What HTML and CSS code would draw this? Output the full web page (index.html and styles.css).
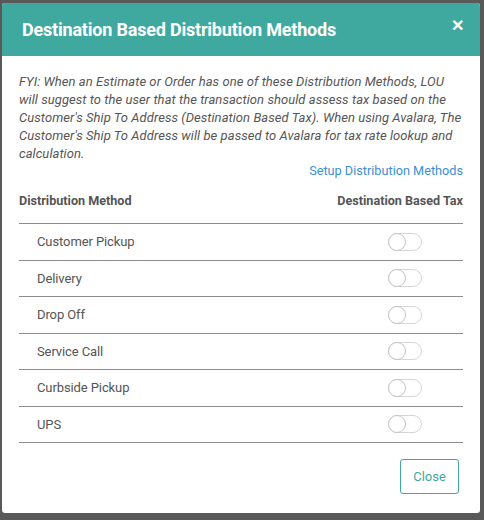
FILE: index.html
```html
<!DOCTYPE html>
<html>
<head>
<meta charset="utf-8">
<title>Destination Based Distribution Methods</title>
<link rel="stylesheet" href="styles.css">
</head>
<body>

<div class="modal">
    <div class="modal-header">
        <h2>Destination Based Distribution Methods</h2>
        <span class="close-x">&#x2715;</span>
    </div>
    <div class="modal-body">
        <p class="fyi">FYI: When an Estimate or Order has one of these Distribution Methods, LOU
        will suggest to the user that the transaction should assess tax based on the
        Customer's Ship To Address (Destination Based Tax). When using Avalara, The
        Customer's Ship To Address will be passed to Avalara for tax rate lookup and
        calculation.</p>
        <div class="setup"><a>Setup Distribution Methods</a></div>
        <table class="methods">
            <thead>
                <tr><th>Distribution Method</th><th class="tax">Destination Based Tax</th></tr>
            </thead>
            <tbody>
                <tr><td>Customer Pickup</td><td class="tax"><span class="toggle"></span></td></tr>
                <tr><td>Delivery</td><td class="tax"><span class="toggle"></span></td></tr>
                <tr><td>Drop Off</td><td class="tax"><span class="toggle"></span></td></tr>
                <tr><td>Service Call</td><td class="tax"><span class="toggle"></span></td></tr>
                <tr><td>Curbside Pickup</td><td class="tax"><span class="toggle"></span></td></tr>
                <tr><td>UPS</td><td class="tax"><span class="toggle"></span></td></tr>
            </tbody>
        </table>
    </div>
    <div class="modal-footer">
        <button class="btn-close">Close</button>
    </div>
</div>

</body>
</html>
```

FILE: styles.css
```css
html, body { margin: 0; height: 100%; }
body { background-color: #595959; font-family: Roboto, "Liberation Sans", sans-serif; color: #555; padding: 3px 4px 0 2px; box-sizing: border-box; }

.modal { background-color: #fff; border-radius: 3px; overflow: hidden; height: 510px; display: flex; flex-direction: column; }

.modal-header { background-color: #3fa9a0; color: #fff; height: 53px; flex-shrink: 0; display: flex; align-items: flex-start; justify-content: space-between; padding: 0 16px 0 20px; }
.modal-header h2 { margin: 0; padding-top: 17px; font-size: 18px; font-weight: 700; line-height: 20px; letter-spacing: -0.2px; }
.close-x { font-size: 16px; font-weight: 700; padding-top: 13px; line-height: 20px; }

.modal-body { padding: 17px 17px 0 17px; }
.fyi { margin: 0 -2px 0 0; font-size: 13px; font-style: italic; line-height: 18px; letter-spacing: 0.06px; }
.setup { text-align: right; font-size: 12.7px; line-height: 18px; margin-top: -1px; }
.setup a { color: #3a8fd6; }

.methods { width: 100%; border-collapse: collapse; font-size: 13px; }
.methods th { font-size: 12.6px; font-weight: 700; line-height: 15px; text-align: left; padding: 13px 0 15px 0; border-bottom: 1px solid #8c8c8c; }
.methods th.tax { text-align: right; }
.methods td { padding: 0 0 0 18px; height: 35.5px; border-bottom: 1px solid #8c8c8c; letter-spacing: -0.1px; }
.methods td.tax { text-align: right; padding: 0 41px 0 0; }

.toggle { display: inline-block; vertical-align: middle; width: 32px; height: 16px; border: 1px solid #d6d6d6; border-radius: 9px; position: relative; }
.toggle:after { content: ""; position: absolute; left: -1px; top: -1px; width: 16px; height: 16px; border-radius: 50%; border: 1px solid #c4c4c4; background: #fff; }

.modal-footer { display: flex; justify-content: flex-end; padding: 16px 21px 0 0; }
.btn-close { font-family: Roboto, "Liberation Sans", sans-serif; font-size: 13px; color: #3fa9a0; background: #fff; border: 1px solid #3fa9a0; border-radius: 3px; width: 59px; height: 35px; }
```
